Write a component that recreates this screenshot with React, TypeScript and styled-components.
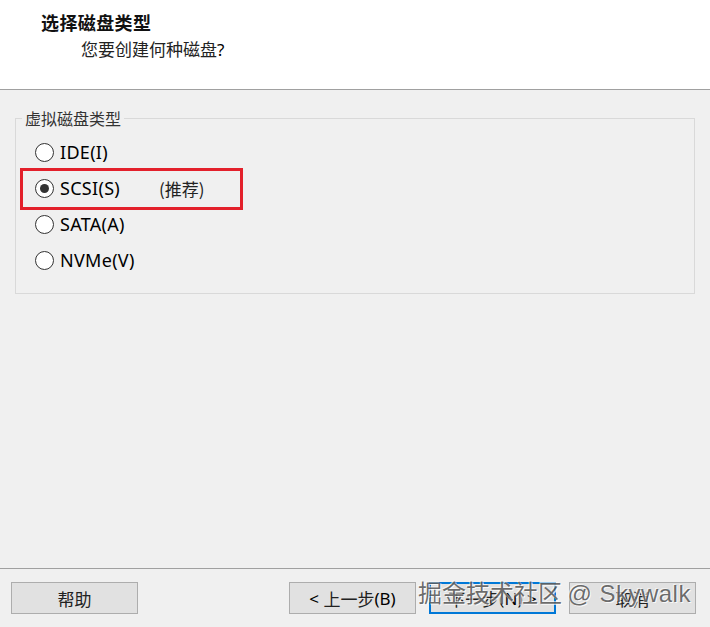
import React from "react";
import styled, { createGlobalStyle } from "styled-components";

const Global = createGlobalStyle`
  html, body { margin: 0; padding: 0; background: #f0f0f0; }
  * { box-sizing: border-box; }
`;

const CJK = `"Noto Sans CJK SC", sans-serif`;
const UI = `"Noto Sans", "Noto Sans CJK SC", sans-serif`;

const Window = styled.div`
  width: 710px;
  height: 627px;
  display: flex;
  flex-direction: column;
  background: #f0f0f0;
  position: relative;
  overflow: hidden;
  font-family: ${CJK};
  color: #111;
`;

const Header = styled.header`
  height: 90px;
  flex: none;
  background: #fff;
  border-bottom: 1px solid #a0a0a0;
  padding: 10px 0 0 41px;
  display: flex;
  flex-direction: column;
`;

const Title = styled.div`
  font-size: 18px;
  font-weight: 700;
  line-height: 24px;
  letter-spacing: 0.4px;
`;

const Subtitle = styled.div`
  font-size: 17px;
  line-height: 24px;
  margin: 3px 0 0 40px;
  color: #222;
`;

const Body = styled.main`
  flex: 1;
  padding: 19px 15px 0 15px;
`;

const Group = styled.fieldset`
  margin: 0;
  height: 185px;
  border: 1px solid #d9d9d9;
  padding: 8px 0 0 4px;
  position: relative;
`;

const Legend = styled.legend`
  font-size: 16px;
  color: #333;
  padding: 0 3px;
  margin-left: 2px;
  line-height: 18px;
`;

const Options = styled.div`
  display: flex;
  flex-direction: column;
  margin-top: -1px;
`;

const Row = styled.label`
  height: 36px;
  display: flex;
  align-items: center;
  padding-left: 15px;
  position: relative;
  font-family: ${UI};
  font-size: 18px;
  color: #000;
  letter-spacing: 0.3px;
`;

const Radio = styled.span<{ $checked?: boolean }>`
  width: 19px;
  height: 19px;
  border-radius: 50%;
  border: 1px solid #333;
  background: #fff;
  display: inline-flex;
  align-items: center;
  justify-content: center;
  margin-right: 6px;
  flex: none;
  &::after {
    content: "";
    width: 9px;
    height: 9px;
    border-radius: 50%;
    background: ${(p) => (p.$checked ? "#333" : "transparent")};
  }
`;

const Hint = styled.span`
  margin-left: 39px;
  font-family: ${CJK};
  font-size: 17px;
  color: #222;
  letter-spacing: 0;
`;

const Highlight = styled.span`
  position: absolute;
  left: 0;
  top: -2px;
  width: 223px;
  height: 42px;
  border: 3px solid #e3202b;
  pointer-events: none;
`;

const Footer = styled.footer`
  height: 59px;
  flex: none;
  border-top: 1px solid #a0a0a0;
  padding: 13px 14px 0 11px;
  display: flex;
  align-items: flex-start;
`;

const Button = styled.button<{ $primary?: boolean; $gap?: boolean }>`
  width: 127px;
  height: 32px;
  margin-left: ${(p) => (p.$gap ? "13px" : "0")};
  background: #e1e1e1;
  border: ${(p) => (p.$primary ? "2px solid #0078d7" : "1px solid #adadad")};
  font-family: ${CJK};
  font-size: 17px;
  color: #222;
  padding: 0;
  display: flex;
  align-items: center;
  justify-content: center;
`;

const Spacer = styled.div`
  flex: 1;
`;

const Latin = styled.span`
  font-family: ${UI};
  color: #000;
`;

const Watermark = styled.div`
  position: absolute;
  left: 418px;
  top: 576px;
  font-family: "Noto Sans CJK SC", sans-serif;
  font-size: 24px;
  line-height: 32px;
  color: rgba(70, 70, 70, 0.78);
  text-shadow: 1px 1px 0 rgba(255, 255, 255, 0.8), -1px -1px 0 rgba(255, 255, 255, 0.6);
  white-space: nowrap;
  pointer-events: none;
`;

const WMLatin = styled.span`
  font-family: "Liberation Sans", sans-serif;
  letter-spacing: 0.5px;
`;

const options = [
  { label: "IDE(I)", checked: false },
  { label: "SCSI(S)", checked: true, hint: "(推荐)" },
  { label: "SATA(A)", checked: false },
  { label: "NVMe(V)", checked: false },
];

export default function App() {
  return (
    <>
      <Global />
      <Window>
        <Header>
          <Title>选择磁盘类型</Title>
          <Subtitle>
            您要创建何种磁盘<Latin>?</Latin>
          </Subtitle>
        </Header>
        <Body>
          <Group>
            <Legend>虚拟磁盘类型</Legend>
            <Options>
              {options.map((o) => (
                <Row key={o.label}>
                  <Radio $checked={o.checked} />
                  {o.label}
                  {o.hint && <Hint>{o.hint}</Hint>}
                  {o.hint && <Highlight />}
                </Row>
              ))}
            </Options>
          </Group>
        </Body>
        <Footer>
          <Button>帮助</Button>
          <Spacer />
          <Button>
            <Latin>&lt;&nbsp;</Latin>上一步<Latin>(B)</Latin>
          </Button>
          <Button $primary $gap>
            下一步<Latin>(N) &gt;</Latin>
          </Button>
          <Button $gap>取消</Button>
        </Footer>
        <Watermark>
          掘金技术社区 <WMLatin>@ Skywalk</WMLatin>
        </Watermark>
      </Window>
    </>
  );
}
